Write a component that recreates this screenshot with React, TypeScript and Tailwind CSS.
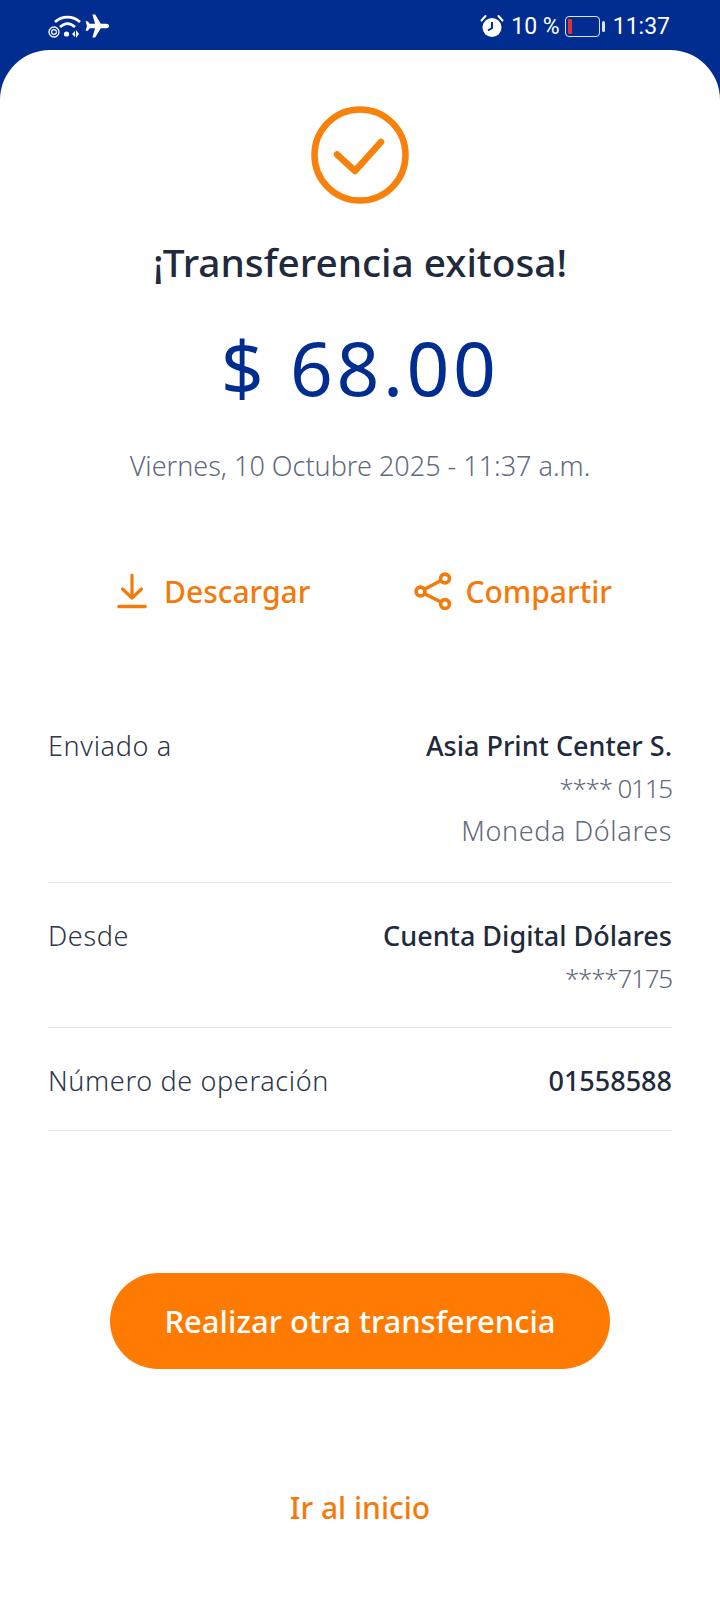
function WifiIcon() {
  return (
    <svg width="33" height="24" viewBox="0 0 33 24" fill="none">
      <path d="M7 8C14 1.5 25 1.5 32 8" stroke="white" strokeWidth="2.8" />
      <path d="M12 13C17 8.5 22 8.5 27 13" stroke="white" strokeWidth="2.8" />
      <circle cx="6" cy="18" r="5" stroke="white" strokeWidth="1.3" />
      <circle cx="6" cy="18" r="2.4" stroke="white" strokeWidth="1.2" />
      <circle cx="18.5" cy="20" r="2.6" fill="white" />
      <path d="M24 20l3-3v6zM28 16v8l3-4z" fill="white" />
    </svg>
  );
}

function PlaneIcon() {
  return (
    <svg width="24" height="24" viewBox="0 0 24 24" fill="white">
      <path d="M24 12c0-1.3-1.1-2.2-2.5-2.2h-5.7L10.2.5H7.4l2.7 9.3H4.7L2.8 7.2H.6L2 12 .6 16.8h2.2l1.9-2.6h5.4l-2.7 9.3h2.8l5.6-9.3h5.7c1.4 0 2.5-.9 2.5-2.2z" />
    </svg>
  );
}

function AlarmIcon() {
  return (
    <svg width="24" height="24" viewBox="0 0 24 24" fill="none">
      <circle cx="12" cy="13.5" r="9.5" fill="white" />
      <path d="M12 8v6l-4 2.5" stroke="#002d8f" strokeWidth="2" />
      <path d="M1.5 6.5L5.5 2M22.5 6.5L18.5 2" stroke="white" strokeWidth="2" strokeLinecap="round" />
    </svg>
  );
}

function BatteryIcon() {
  return (
    <div className="flex items-center gap-[2px]">
      <div className="flex h-[21px] w-[35px] items-center rounded-[4px] border-[1.5px] border-[#dbe4f7] pl-[2px]">
        <div className="h-[15px] w-[4px] rounded-[1px] bg-[#e0303c]" />
      </div>
      <div className="h-[11px] w-[3px] rounded-full bg-[#dbe4f7]" />
    </div>
  );
}

function SaveIcon() {
  return (
    <svg width="30" height="38" viewBox="0 0 30 38" fill="none" stroke="#f47a0c" strokeWidth="3.2" strokeLinecap="round" strokeLinejoin="round">
      <path d="M15 3V26M5.5 17L15 26L24.5 17" />
      <path d="M2 34.5H28" strokeWidth="3.6" />
    </svg>
  );
}

function ShareIcon() {
  return (
    <svg width="38" height="38" viewBox="0 0 38 38" fill="none" stroke="#f47a0c" strokeWidth="3.6">
      <circle cx="31" cy="6.5" r="4.4" />
      <circle cx="6.5" cy="19.5" r="4.4" />
      <circle cx="31" cy="32" r="4.4" />
      <path d="M11 17L27 8.5M11 22L27 30" />
    </svg>
  );
}

type Line = { text: string; tight?: boolean };

function DetailRow({
  label,
  lines,
  className,
}: {
  label: string;
  lines: Line[];
  className: string;
}) {
  return (
    <div className={`flex justify-between border-b border-[#e2e4e8] ${className}`}>
      <span className="text-[27px] font-light leading-[42px] tracking-[0.65px] text-[#2b3648]">{label}</span>
      <div className="flex flex-col items-end">
        {lines.map((line, i) =>
          i === 0 ? (
            <span key={line.text} className="text-[27px] font-medium leading-[42px] text-[#1f2a3d]">
              {line.text}
            </span>
          ) : (
            <span
              key={line.text}
              className={
                line.tight
                  ? "text-[26px] font-light leading-[42px] tracking-[-1.2px] text-[#5f6b7e]"
                  : "text-[27px] font-light leading-[43px] tracking-[0.65px] text-[#5f6b7e]"
              }
            >
              {line.text}
            </span>
          ),
        )}
      </div>
    </div>
  );
}

export default function App() {
  return (
    <div className="flex h-[1600px] w-[720px] flex-col overflow-hidden bg-[#002d8f] font-['Noto_Sans',sans-serif]">
      <header className="flex h-[50px] shrink-0 items-center justify-between pl-[48px] pr-[50px] pt-[2px] font-['Roboto',sans-serif] text-white">
        <div className="flex items-center gap-[4px]">
          <WifiIcon />
          <PlaneIcon />
        </div>
        <div className="flex items-center text-[23px] leading-none">
          <AlarmIcon />
          <span className="ml-[7px]">10 %</span>
          <span className="ml-[5px]">
            <BatteryIcon />
          </span>
          <span className="ml-[8px]">11:37</span>
        </div>
      </header>

      <main className="flex flex-1 flex-col items-center rounded-t-[50px] bg-white px-[48px] pt-[56px]">
        <svg width="98" height="98" viewBox="0 0 98 98" fill="none" stroke="#f6820c" className="shrink-0">
          <circle cx="49" cy="49" r="45.5" strokeWidth="6.5" />
          <path d="M26 48.5L44 65L70 36" strokeWidth="6.5" strokeLinecap="round" strokeLinejoin="round" />
        </svg>

        <h1 className="mt-[33px] text-[38.8px] font-medium leading-[50px] text-[#1f2a3d]">¡Transferencia exitosa!</h1>
        <p className="mt-[30px] text-[75px] font-normal leading-[100px] tracking-[3.5px] text-[#002d8f]">$ 68.00</p>
        <p className="mt-[29px] text-[27px] font-light leading-[40px] text-[#5f6b7e]">Viernes, 10 Octubre 2025 - 11:37 a.m.</p>

        <div className="mt-[80px] flex h-[50px] w-full items-center">
          <button className="ml-[69px] flex items-center gap-[17px] text-[30px] font-medium text-[#f47a0c]">
            <SaveIcon />
            Descargar
          </button>
          <button className="ml-[104px] flex items-center gap-[13px] text-[30px] font-medium text-[#f47a0c]">
            <ShareIcon />
            Compartir
          </button>
        </div>

        <section className="mt-[109px] w-full">
          <DetailRow
            label="Enviado a"
            lines={[{ text: "Asia Print Center S." }, { text: "**** 0115", tight: true }, { text: "Moneda Dólares" }]}
            className="h-[158px]"
          />
          <DetailRow
            label="Desde"
            lines={[{ text: "Cuenta Digital Dólares" }, { text: "****7175", tight: true }]}
            className="mt-[32px] h-[113px]"
          />
          <DetailRow label="Número de operación" lines={[{ text: "01558588" }]} className="mt-[32px] h-[71px]" />
        </section>

        <button className="mt-[142px] h-[96px] w-[500px] shrink-0 rounded-full bg-[#ff7a00] text-[31px] font-medium text-white">
          Realizar otra transferencia
        </button>
        <button className="mt-[114px] text-[30px] font-medium leading-[50px] text-[#f47a0c]">Ir al inicio</button>
      </main>
    </div>
  );
}
